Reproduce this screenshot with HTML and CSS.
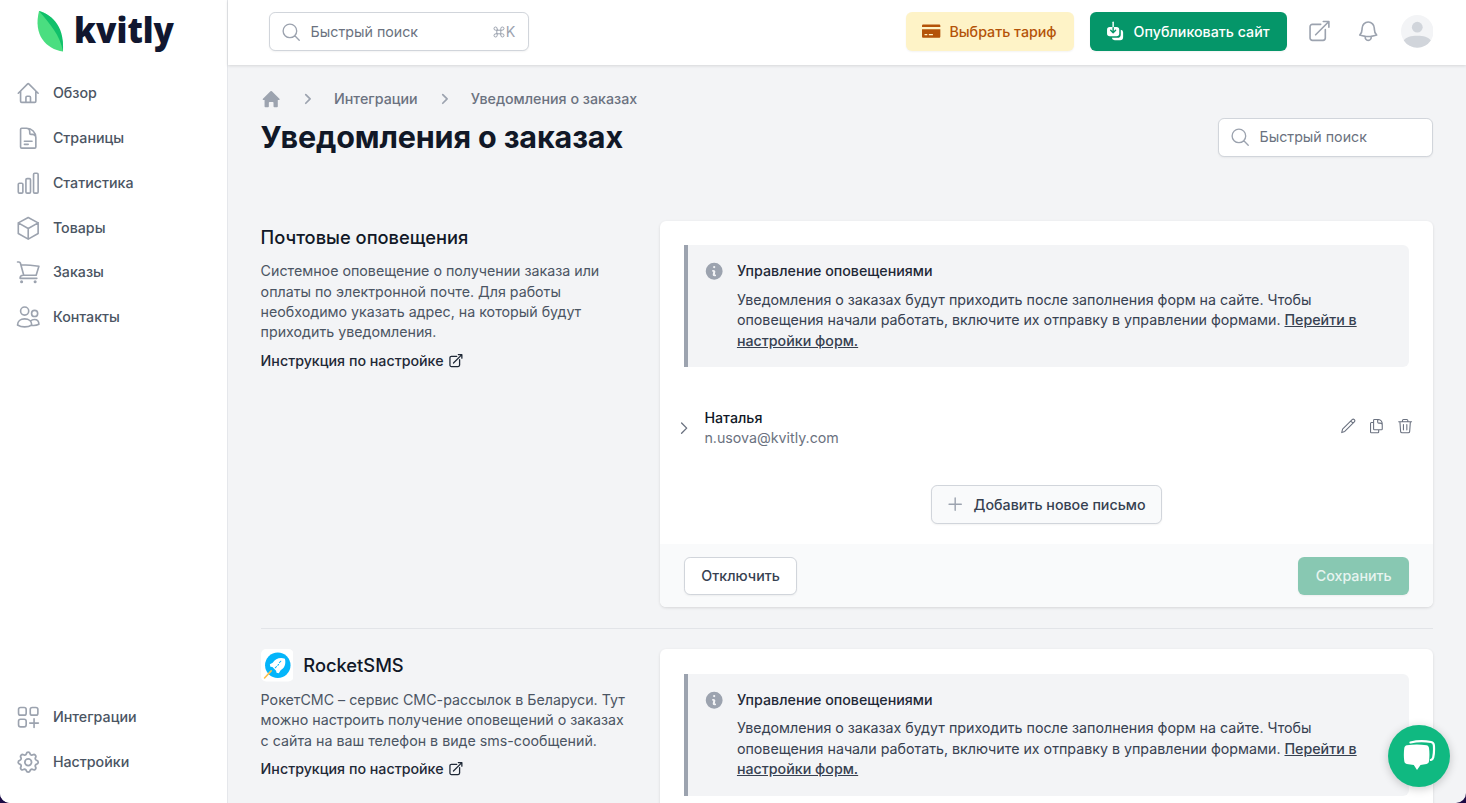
FILE: index.html
```html
<!DOCTYPE html>
<html lang="ru">
<head>
    <meta charset="UTF-8">
    <meta name="viewport" content="width=device-width, initial-scale=1.0">
    <title>Уведомления о заказах</title>
    <link rel="stylesheet" href="styles.css">
</head>
<body>
    <!-- Shared icons -->
    <svg class="sprite" aria-hidden="true">
        <symbol id="i-search" viewBox="0 0 24 24"><path d="M21.500 21.500l-5.200-5.200M18.500 10.500a8 8 0 1 1-16 0 8 8 0 0 1 16 0z"/></symbol>
        <symbol id="i-chevron" viewBox="0 0 24 24"><path d="M8.250 4.500l7.500 7.500-7.500 7.500"/></symbol>
        <symbol id="i-external" viewBox="0 0 24 24"><path d="M13.500 5.250H5.250A2.250 2.250 0 0 0 3 7.500v11.250A2.250 2.250 0 0 0 5.250 21h10.500A2.250 2.250 0 0 0 18 18.750V10.500M8.500 15.500L21.500 2.500m0 0h-5.500M21.500 2.500v5.500"/></symbol>
        <symbol id="i-info" viewBox="0 0 20 20"><path fill="currentColor" stroke="none" fill-rule="evenodd" d="M18.300 10a8.300 8.300 0 1 1-16.600 0 8.300 8.300 0 0 1 16.600 0zm-7.200-4a1.100 1.100 0 1 1-2.200 0 1.100 1.100 0 0 1 2.200 0zM8.800 8.800a.9.9 0 0 0 0 1.800h.3l-.4 1.900A2 2 0 0 0 10.600 15h.4a.9.900 0 0 0 0-1.800h-.4l.4-1.900a2 2 0 0 0-1.900-2.500z"/></symbol>
    </svg>

    <div class="app">
        <aside class="sidebar">
            <a class="logo" href="#">
                <svg viewBox="0 0 140 44" role="img">
                    <path fill="#4ade80" d="M2 1C8 2 27 12 26 41.500C9 39-4 25 2 1z"/>
                    <path fill="#10c06a" d="M2 1C12 4 28 13 26 41.500C23 25 13 14 2 1z"/>
                    <text class="logo-text" x="37" y="33" textLength="100" lengthAdjust="spacingAndGlyphs">kvitly</text>
                </svg>
            </a>
            <nav class="nav">
                <a class="nav-item" href="#">
                    <svg class="icon" viewBox="0 0 24 24"><path d="M2.25 12l8.954-8.955c.44-.439 1.152-.439 1.591 0L21.75 12M4.5 9.75v10.125c0 .621.504 1.125 1.125 1.125H9.75v-4.875c0-.621.504-1.125 1.125-1.125h2.25c.621 0 1.125.504 1.125 1.125V21h4.125c.621 0 1.125-.504 1.125-1.125V9.75M8.25 21h8.25"/></svg>
                    Обзор
                </a>
                <a class="nav-item" href="#">
                    <svg class="icon" viewBox="0 0 24 24"><path d="M19.5 14.25v-2.625a3.375 3.375 0 0 0-3.375-3.375h-1.5A1.125 1.125 0 0 1 13.5 7.125v-1.5a3.375 3.375 0 0 0-3.375-3.375H8.25m0 12.75h7.5m-7.5 3H12M10.5 2.25H5.625c-.621 0-1.125.504-1.125 1.125v17.25c0 .621.504 1.125 1.125 1.125h12.75c.621 0 1.125-.504 1.125-1.125V11.25a9 9 0 0 0-9-9z"/></svg>
                    Страницы
                </a>
                <a class="nav-item" href="#">
                    <svg class="icon" viewBox="0 0 24 24"><path d="M2.25 13.125C2.25 12.504 2.754 12 3.375 12h2.25c.621 0 1.125.504 1.125 1.125v7.5c0 .621-.504 1.125-1.125 1.125h-2.25a1.125 1.125 0 0 1-1.125-1.125v-7.5zM9.75 8.625c0-.621.504-1.125 1.125-1.125h2.25c.621 0 1.125.504 1.125 1.125v12c0 .621-.504 1.125-1.125 1.125h-2.25a1.125 1.125 0 0 1-1.125-1.125v-12zM17.25 3.375c0-.621.504-1.125 1.125-1.125h2.25c.621 0 1.125.504 1.125 1.125v17.25c0 .621-.504 1.125-1.125 1.125h-2.25a1.125 1.125 0 0 1-1.125-1.125V3.375z"/></svg>
                    Статистика
                </a>
                <a class="nav-item" href="#">
                    <svg class="icon" viewBox="0 0 24 24"><path d="M21.75 6.75L12 1.5 2.25 6.75m19.5 0L12 12.25m9.75-5.5v10.5L12 22.75m-9.75-16L12 12.25m-9.75-5.5v10.5L12 22.75m0-10.5v10.5"/></svg>
                    Товары
                </a>
                <a class="nav-item" href="#">
                    <svg class="icon" viewBox="0 0 24 24"><path d="M1.5 2h1.400c.7 0 1.200.4 1.400 1L7.600 15M5 4.700c6 0 11.600.4 17.500 1.500L19.800 15H7a3 3 0 0 0-3 3h16.500"/><circle class="dot" cx="5.500" cy="21.300" r="1.500"/><circle class="dot" cx="18.800" cy="21.300" r="1.500"/></svg>
                    Заказы
                </a>
                <a class="nav-item" href="#">
                    <svg class="icon" viewBox="0 0 24 24"><circle cx="8.500" cy="6" r="4"/><circle cx="18.300" cy="8.300" r="3"/><path d="M1.500 19.600c0-3.600 2.800-6 7-6s7 2.400 7 6c-4 2.600-10 2.600-14 0zM15.500 20c2.500.3 5 0 7-1 0-2.800-1.600-4.700-4.300-4.700-1.700 0-3 .6-3.900 1.700"/></svg>
                    Контакты
                </a>
            </nav>
            <nav class="nav nav-bottom">
                <a class="nav-item" href="#">
                    <svg class="icon" viewBox="0 0 24 24"><rect x="2.500" y="2.500" width="7.500" height="7.500" rx="2"/><rect x="14" y="2.500" width="7.500" height="7.500" rx="2"/><rect x="2.500" y="14" width="7.500" height="7.500" rx="2"/><path d="M17.750 13.500v8.500M13.500 17.750H22"/></svg>
                    Интеграции
                </a>
                <a class="nav-item" href="#">
                    <svg class="icon" viewBox="1 1 22 22"><path d="M10.325 4.317c.426-1.756 2.924-1.756 3.350 0a1.724 1.724 0 0 0 2.573 1.066c1.543-.940 3.310.826 2.370 2.370a1.724 1.724 0 0 0 1.065 2.572c1.756.426 1.756 2.924 0 3.350a1.724 1.724 0 0 0-1.066 2.573c.940 1.543-.826 3.310-2.370 2.370a1.724 1.724 0 0 0-2.572 1.065c-.426 1.756-2.924 1.756-3.350 0a1.724 1.724 0 0 0-2.573-1.066c-1.543.940-3.310-.826-2.370-2.370a1.724 1.724 0 0 0-1.065-2.572c-1.756-.426-1.756-2.924 0-3.350a1.724 1.724 0 0 0 1.066-2.573c-.940-1.543.826-3.310 2.370-2.370.996.608 2.296.070 2.572-1.065z"/><circle cx="12" cy="12" r="3"/></svg>
                    Настройки
                </a>
            </nav>
        </aside>

        <div class="page">
            <header class="topbar">
                <div class="search search-top">
                    <svg class="icon"><use href="#i-search"/></svg>
                    <span>Быстрый поиск</span>
                    <kbd><svg class="cmd" viewBox="0 0 12 12"><path d="M4.200 4.200h3.600v3.600H4.200zM4.200 4.200H2.700a1.600 1.600 0 1 1 1.500-1.600zM7.800 4.200V2.600a1.600 1.600 0 1 1 1.500 1.600zM7.800 7.800h1.500a1.600 1.600 0 1 1-1.500 1.600zM4.200 7.800v1.600a1.600 1.600 0 1 1-1.500-1.600z"/></svg>K</kbd>
                </div>
                <div class="actions">
                    <button class="btn btn-plan">
                        <svg class="btn-icon" viewBox="0 0 20 20"><path fill="currentColor" fill-rule="evenodd" d="M2.300 3.500h15.400c.8 0 1.300.5 1.300 1.200V6H1V4.700c0-.7.5-1.200 1.300-1.200zM1 8h18v7.200c0 .8-.5 1.300-1.300 1.300H2.300c-.8 0-1.300-.5-1.300-1.300zm2.500 4.800v1.200h2.700v-1.200zm4.200 0v1.200h4v-1.200z"/></svg>
                        Выбрать тариф
                    </button>
                    <button class="btn btn-green">
                        <svg class="btn-icon" viewBox="0 0 20 20"><path fill="currentColor" d="M4.700 6h6.600a2.700 2.700 0 0 1 2.700 2.700v3.600a2.700 2.700 0 0 1-2.700 2.700H4.700A2.700 2.700 0 0 1 2 12.300V8.700A2.700 2.700 0 0 1 4.700 6z"/><path fill="currentColor" d="M15.500 8.500A2.600 2.600 0 0 1 17.800 11v5a3 3 0 0 1-3 3H9.500a3 3 0 0 1-2.800-2.500h5.500a3.300 3.300 0 0 0 3.300-3.300z"/><path class="arrow-top" d="M8 6V1.200"/><path class="arrow" d="M8 6.500v5M5.600 9.200L8 11.600l2.400-2.400"/></svg>
                        Опубликовать сайт
                    </button>
                    <svg class="icon icon-share"><use href="#i-external"/></svg>
                    <svg class="icon icon-bell" viewBox="0 0 24 24"><path d="M14.857 17.082a23.848 23.848 0 0 0 5.454-1.310A8.967 8.967 0 0 1 18 9.750V9A6 6 0 0 0 6 9v.750a8.967 8.967 0 0 1-2.312 6.022c1.733.640 3.560 1.085 5.455 1.310m5.714 0a24.255 24.255 0 0 1-5.714 0m5.714 0a3 3 0 1 1-5.714 0"/></svg>
                    <svg class="avatar" viewBox="0 0 32 32"><circle cx="16" cy="16" r="16" fill="#f3f4f6"/><circle cx="16" cy="12" r="5.300" fill="#d1d5db"/><path fill="#d1d5db" d="M2.700 25C5 21.800 10 20.400 16 20.400S27 21.800 29.300 25a16 16 0 0 1-26.600 0z"/></svg>
                </div>
            </header>

            <main class="content">
                <div class="breadcrumbs">
                    <svg class="crumb-home" viewBox="0 0 20 20"><path fill="currentColor" d="M9.300 2.300a1 1 0 0 1 1.400 0l7.400 7.300c.5.500.2 1.300-.5 1.300H16.500v6.200c0 .5-.3.800-.8.800h-2.600c-.5 0-.8-.3-.8-.8v-3.500c0-.5-.3-.8-.8-.8h-3c-.5 0-.8.3-.8.8v3.500c0 .5-.3.800-.8.800H4.300c-.5 0-.8-.3-.8-.8v-6.200H2.400c-.7 0-1-.8-.5-1.300z"/></svg>
                    <svg class="crumb-sep"><use href="#i-chevron"/></svg>
                    <a href="#">Интеграции</a>
                    <svg class="crumb-sep"><use href="#i-chevron"/></svg>
                    <a href="#">Уведомления о заказах</a>
                </div>
                <div class="title-row">
                    <h1>Уведомления о заказах</h1>
                    <div class="search search-page">
                        <svg class="icon"><use href="#i-search"/></svg>
                        <span>Быстрый поиск</span>
                    </div>
                </div>

                <section class="section">
                    <div class="about">
                        <div class="service">
                            <h2>Почтовые оповещения</h2>
                        </div>
                        <p>Системное оповещение о получении заказа или оплаты по электронной почте. Для работы необходимо указать адрес, на который будут приходить уведомления.</p>
                        <a class="guide" href="#">Инструкция по настройке <svg><use href="#i-external"/></svg></a>
                    </div>
                    <div class="card">
                        <div class="card-body">
                            <div class="alert">
                                <svg class="alert-icon"><use href="#i-info"/></svg>
                                <div>
                                    <h3>Управление оповещениями</h3>
                                    <p>Уведомления о заказах будут приходить после заполнения форм на сайте. Чтобы оповещения начали работать, включите их отправку в управлении формами. <a href="#">Перейти в настройки форм.</a></p>
                                </div>
                            </div>
                            <div class="recipient">
                                <svg class="recipient-toggle"><use href="#i-chevron"/></svg>
                                <div class="recipient-info">
                                    <div class="recipient-name">Наталья</div>
                                    <div class="recipient-email">n.usova@kvitly.com</div>
                                </div>
                                <div class="tools">
                                    <svg viewBox="0 0 24 24"><path d="M2.500 21.500l1.300-5L17.900 2.500a2.100 2.100 0 0 1 3.200 3.200L7 19.800zM16 4.500l3.200 3.200"/></svg>
                                    <svg viewBox="0 0 24 24"><path d="M15.750 17.250v3.375c0 .621-.504 1.125-1.125 1.125h-9.750a1.125 1.125 0 0 1-1.125-1.125V7.875c0-.621.504-1.125 1.125-1.125H8.250m7.500-4.500H9.375c-.621 0-1.125.504-1.125 1.125v12.750c0 .621.504 1.125 1.125 1.125h10.500c.621 0 1.125-.504 1.125-1.125V9c0-4-2-6.750-6.750-6.750v3.500c0 1.200.5 1.750 1.700 1.750h2c1.700 0 3 1 3 2.500"/></svg>
                                    <svg viewBox="0 0 24 24"><path d="M2.500 5.500h19M8 5.500V4c0-1 .7-1.750 1.700-1.750h4.600c1 0 1.700.750 1.700 1.750v1.500M4.300 5.500l1 14.200c.1 1.200 1 2.050 2.200 2.050h9c1.200 0 2.100-.850 2.200-2.050l1-14.200M9.500 9.500v8M14.500 9.500v8"/></svg>
                                </div>
                            </div>
                            <button class="btn btn-add">
                                <svg class="btn-icon" viewBox="0 0 20 20"><path d="M10 4v12M4 10h12"/></svg>
                                Добавить новое письмо
                            </button>
                        </div>
                        <div class="card-footer">
                            <button class="btn btn-white">Отключить</button>
                            <button class="btn btn-green" disabled>Сохранить</button>
                        </div>
                    </div>
                </section>

                <section class="section section-next">
                    <div class="about">
                        <div class="service">
                            <svg class="service-logo" viewBox="0 0 32 32"><rect width="32" height="32" rx="5" fill="#fff"/><circle cx="16.500" cy="16" r="12.500" fill="#04b5fa"/><path fill="#fff" d="M23.500 9.500c-5-1.500-9.500 0-12 4L8.700 15l.5 2.500 2 .2 3.600 3.600.5 2 2.200.5 1.800-3c4-2.200 5.400-6.500 4.200-11.300z"/><path d="M14 18.500l1.300-1.300M16.500 16l.8-.8M18 13.500l1.500-1.500" fill="none" stroke="#04b5fa"/><path d="M3.500 28.500l6.500-7" stroke="#fbc04e" stroke-width="1.600"/></svg>
                            <h2>RocketSMS</h2>
                        </div>
                        <p>РокетСМС – сервис СМС-рассылок в Беларуси. Тут можно настроить получение оповещений о заказах с сайта на ваш телефон в виде sms-сообщений.</p>
                        <a class="guide" href="#">Инструкция по настройке <svg><use href="#i-external"/></svg></a>
                    </div>
                    <div class="card">
                        <div class="card-body">
                            <div class="alert">
                                <svg class="alert-icon"><use href="#i-info"/></svg>
                                <div>
                                    <h3>Управление оповещениями</h3>
                                    <p>Уведомления о заказах будут приходить после заполнения форм на сайте. Чтобы оповещения начали работать, включите их отправку в управлении формами. <a href="#">Перейти в настройки форм.</a></p>
                                </div>
                            </div>
                        </div>
                    </div>
                </section>
            </main>
        </div>
    </div>

    <button class="chat">
        <svg viewBox="0 0 34 34"><path fill="none" stroke="#fff" stroke-width="2.200" d="M8.500 3.500C15 1.800 23 1.800 29 3c2 .4 2.800 1.500 2.900 3.500.3 4 .2 8-.7 12-.3 1.300-1 2.200-2.300 2.500"/><path fill="#fff" d="M5 6.300c6.500-1.200 13-1.200 19.500 0 1.500.3 2.300 1.200 2.500 2.700.6 4.500.6 9 0 13.300-.2 1.500-1 2.400-2.500 2.700-2 .4-4 .7-6 .9l-3.500 5-3.200-5c-2.300-.2-4.700-.5-7-.9-1.500-.3-2.300-1.200-2.500-2.700-.6-4.300-.6-8.800 0-13.300.2-1.500 1.200-2.400 2.700-2.700z"/></svg>
    </button>
</body>
</html>
```
FILE: styles.css
```css
* {
    box-sizing: border-box;
}

html {
    font-size: 16.289px;
}

body {
    margin: 0;
    height: 100vh;
    overflow: hidden;
    background: #1c0b45;
    color: #111827;
    font-family: Inter, "Liberation Sans", sans-serif;
    font-size: 0.875rem;
    line-height: 1.25rem;
    letter-spacing: -0.01px;
}

h1, h2, h3, p {
    margin: 0;
}

a {
    color: inherit;
    text-decoration: none;
}

svg {
    display: block;
    flex-shrink: 0;
    fill: none;
    stroke-linecap: round;
    stroke-linejoin: round;
}

.sprite {
    position: absolute;
    width: 0;
    height: 0;
}

.icon {
    width: 1.5rem;
    height: 1.5rem;
    stroke: #9ca3af;
    stroke-width: 1.6;
}

.app {
    display: flex;
    height: 100vh;
    overflow: hidden;
    border-radius: 0 0 10px 10px;
    background: #f3f4f6;
}

/* Sidebar */
.sidebar {
    display: flex;
    flex-direction: column;
    width: 14rem;
    flex-shrink: 0;
    padding-bottom: 1.12rem;
    background: #fff;
    border-right: 1px solid #e5e7eb;
}

.logo {
    height: 4.36rem;
    padding: 10px 0 0 37px;
}

.logo svg {
    width: 140px;
    height: 44px;
    overflow: visible;
}

.logo-text {
    fill: #111730;
    font-family: "Noto Sans", sans-serif;
    font-size: 35px;
    font-weight: 900;
}

.nav-item {
    display: flex;
    align-items: center;
    gap: 0.75rem;
    height: 2.75rem;
    padding: 0 1rem;
    color: #4b5563;
    font-weight: 500;
}

.nav-bottom {
    margin-top: auto;
}

.dot {
    fill: #9ca3af;
    stroke: none;
}

/* Top bar */
.page {
    flex: 1;
    min-width: 0;
}

.topbar {
    position: relative;
    display: flex;
    justify-content: space-between;
    height: 4rem;
    padding: 0.75rem 2rem 0 2.5rem;
    background: #fff;
    box-shadow: 0 1px 3px rgba(0,0,0,0.12);
}

.search {
    display: flex;
    align-items: center;
    height: 2.4rem;
    padding: 0 0.8rem 0 0.68rem;
    border: 1px solid #d1d5db;
    border-radius: 0.375rem;
    background: #fff;
    color: #6b7280;
    box-shadow: 0 1px 2px rgba(0,0,0,0.05);
}

.search .icon {
    width: 1.25rem;
    height: 1.25rem;
    margin-right: 0.58rem;
}

.search-top {
    width: 16rem;
}

.search-page {
    width: 13.25rem;
}

.search kbd {
    display: flex;
    align-items: center;
    gap: 1px;
    margin-left: auto;
    color: #9ca3af;
    font-family: inherit;
}

.cmd {
    width: 12px;
    height: 12px;
    stroke: #9ca3af;
}

.actions {
    display: flex;
    align-items: center;
    height: 2.375rem;
}

.btn {
    display: flex;
    align-items: center;
    height: 2.375rem;
    padding: 0 1rem;
    border: 1px solid transparent;
    border-radius: 0.375rem;
    font-family: inherit;
    font-size: 0.875rem;
    font-weight: 500;
    color: #374151;
    white-space: nowrap;
    box-shadow: 0 1px 2px rgba(0,0,0,0.05);
}

.btn-icon {
    width: 1.25rem;
    height: 1.25rem;
    margin: 0 0.5rem 0 -0.15rem;
}

.btn-plan {
    margin-right: 1rem;
    background: #fef3c7;
    color: #b45309;
}

.btn-green {
    background: #059669;
    color: #fff;
}

.btn-green:disabled {
    background: #88c8b2;
    color: #e7f4f0;
}

.arrow-top {
    stroke: #fff;
    stroke-width: 1.4;
}

.arrow {
    stroke: #059669;
    stroke-width: 1.4;
}

.icon-share {
    margin-left: 1.25rem;
}

.icon-bell {
    margin: 0 1.25rem 0 1.5rem;
}

.avatar {
    width: 2rem;
    height: 2rem;
}

/* Content */
.content {
    padding: 1.47rem 2rem 0;
}

.breadcrumbs {
    display: flex;
    align-items: center;
    height: 1.25rem;
    color: #6b7280;
    font-weight: 500;
}

.crumb-home {
    width: 1.25rem;
    height: 1.25rem;
    color: #9ca3af;
}

.crumb-sep {
    width: 0.85rem;
    height: 0.85rem;
    margin: 0 1.19rem 0 1.22rem;
    stroke: #9ca3af;
    stroke-width: 3;
}

.title-row {
    display: flex;
    justify-content: space-between;
    align-items: flex-start;
    height: 6.83rem;
    padding-top: 0.5rem;
}

.title-row h1 {
    padding-top: 1px;
    font-size: 1.875rem;
    line-height: 2.25rem;
    font-weight: 700;
    letter-spacing: -0.15px;
}

.section {
    display: grid;
    grid-template-columns: 23rem 1fr;
    gap: 1.5rem;
}

.section-next {
    margin-top: 1.25rem;
    padding-top: 1.25rem;
    border-top: 1px solid #e2e4e8;
}

.about {
    color: #4b5563;
}

.about h2 {
    color: #111827;
    font-size: 1.125rem;
    line-height: 1.5rem;
    font-weight: 500;
}

.about p {
    margin-top: 0.5rem;
}

.guide {
    display: flex;
    align-items: center;
    gap: 0.3rem;
    margin-top: 0.48rem;
    color: #1f2937;
    font-weight: 500;
}

.guide svg {
    width: 0.95rem;
    height: 0.95rem;
    stroke: #1f2937;
    stroke-width: 2;
}

.service {
    display: flex;
    align-items: center;
    gap: 0.625rem;
    height: 2rem;
}

.service-logo {
    width: 2rem;
    height: 2rem;
}

.card {
    overflow: hidden;
    border-radius: 0.375rem;
    background: #fff;
    box-shadow: 0 1px 3px rgba(0,0,0,0.12);
}

.card-body {
    padding: 1.5rem 1.5rem 1.25rem;
}

.alert {
    display: flex;
    gap: 0.75rem;
    padding: 1rem;
    border-left: 4px solid #9ca3af;
    border-radius: 0 0.375rem 0.375rem 0;
    background: #f3f4f6;
    color: #374151;
}

.alert-icon {
    width: 1.25rem;
    height: 1.25rem;
    color: #9ca3af;
}

.alert h3 {
    color: #1f2937;
    font-size: 0.875rem;
    font-weight: 500;
}

.alert p {
    margin-top: 0.5rem;
}

.alert a {
    font-weight: 500;
    text-decoration: underline;
}

.recipient {
    display: flex;
    align-items: center;
    margin-top: 2.5rem;
}

.recipient-toggle {
    width: 1rem;
    height: 1rem;
    margin: 0 0.75rem 0 -0.5rem;
    stroke: #6b7280;
    stroke-width: 2;
}

.recipient-info {
    flex: 1;
    color: #6b7280;
}

.recipient-name {
    color: #111827;
    font-weight: 500;
}

.tools {
    display: flex;
    gap: 0.75rem;
    margin-right: -0.25rem;
    padding-bottom: 0.25rem;
}

.tools svg {
    width: 1rem;
    height: 1rem;
    stroke: #6b7280;
    stroke-width: 1.6;
}

.btn-add {
    margin: 2.25rem auto 0;
    padding: 0 0.97rem;
    border-color: #d1d5db;
    background: #f9fafb;
}

.btn-add .btn-icon {
    stroke: #9ca3af;
    stroke-width: 1.4;
}

.card-footer {
    display: flex;
    justify-content: space-between;
    padding: 0.75rem 1.5rem;
    background: #f9fafb;
}

.btn-white {
    border-color: #d1d5db;
    background: #fff;
}

/* Chat launcher */
.chat {
    position: fixed;
    right: 16px;
    bottom: 16px;
    display: flex;
    align-items: center;
    justify-content: center;
    width: 62px;
    height: 62px;
    padding: 0;
    border: none;
    border-radius: 50%;
    background: #10b981;
    box-shadow: 0 2px 10px rgba(0,0,0,0.2);
}

.chat svg {
    width: 34px;
    height: 34px;
}
```
